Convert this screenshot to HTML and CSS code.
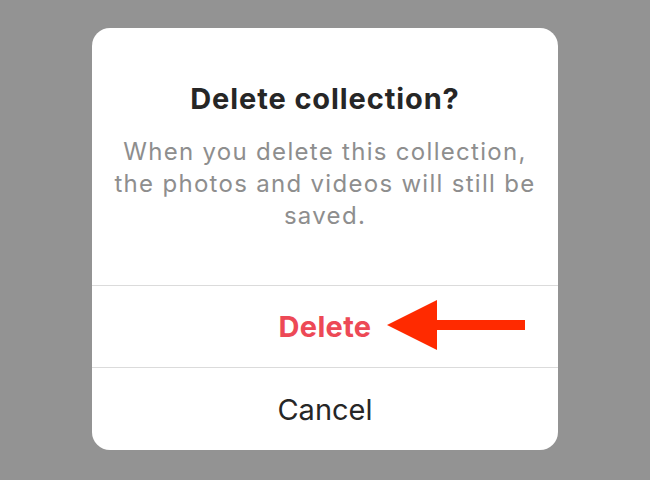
FILE: index.html
```html
<!DOCTYPE html>
<html>
<head>
<meta charset="utf-8">
<link rel="stylesheet" href="styles.css">
</head>
<body>
<div class="dialog">
  <div class="content">
    <h1 class="title">Delete collection?</h1>
    <p class="msg">When you delete this collection,<br>the photos and videos will still be<br>saved.</p>
  </div>
  <div class="btn btn-delete">Delete</div>
  <div class="btn btn-cancel">Cancel</div>
  <svg class="arrow" width="150" height="60" viewBox="0 0 150 60">
    <polygon points="2,30 52,5 52,25 140,25 140,35 52,35 52,55" fill="#ff2a00"/>
  </svg>
</div>
</body>
</html>
```
FILE: styles.css
```css
html, body {
  margin: 0;
  padding: 0;
  background: #939393;
  width: 650px;
  height: 480px;
  overflow: hidden;
}
body {
  padding-top: 28px;
  box-sizing: border-box;
  font-family: Inter, "Liberation Sans", sans-serif;
}
.dialog {
  position: relative;
  width: 466px;
  height: 422px;
  margin-left: 92px;
  background: #ffffff;
  border-radius: 18px;
  display: flex;
  flex-direction: column;
}
.content {
  height: 258px;
  box-sizing: border-box;
  padding-top: 53px;
  text-align: center;
}
.title {
  margin: 0;
  font-size: 29px;
  line-height: 36px;
  font-weight: 700;
  letter-spacing: 0.9px;
  color: #262626;
}
.msg {
  margin: 19px 0 0;
  font-size: 24px;
  line-height: 32px;
  letter-spacing: 1.3px;
  color: #8e8e8e;
}
.btn {
  height: 82px;
  border-top: 1px solid #dbdbdb;
  display: flex;
  align-items: center;
  justify-content: center;
  font-size: 29px;
}
.btn-delete {
  color: #ed4956;
  font-weight: 700;
  letter-spacing: 0.3px;
}
.btn-cancel {
  color: #262626;
  font-weight: 400;
}
.arrow {
  position: absolute;
  left: 293px;
  top: 267px;
}
```
